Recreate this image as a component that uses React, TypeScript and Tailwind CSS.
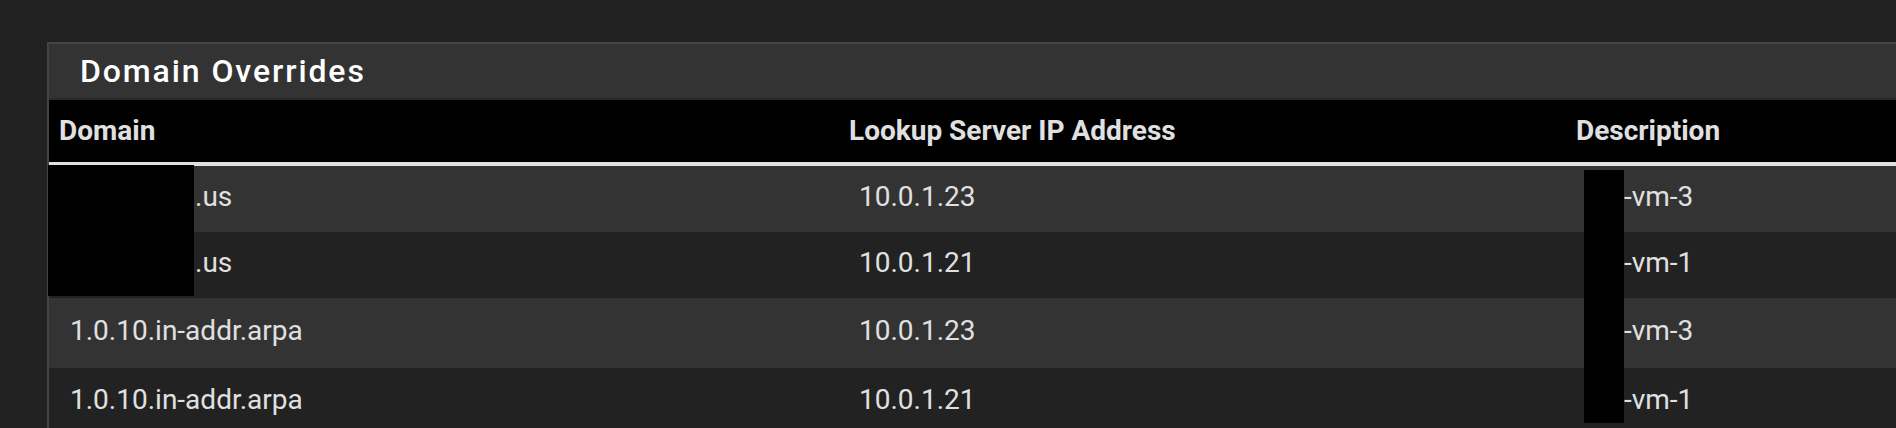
const rows = [
  { domain: ".us", ip: "10.0.1.23", desc: "-vm-3", h: "h-[68px]", bg: "bg-[#333333]" },
  { domain: ".us", ip: "10.0.1.21", desc: "-vm-1", h: "h-[66px]", bg: "bg-[#222222]" },
  { domain: "1.0.10.in-addr.arpa", ip: "10.0.1.23", desc: "-vm-3", h: "h-[70px]", bg: "bg-[#333333]" },
  { domain: "1.0.10.in-addr.arpa", ip: "10.0.1.21", desc: "-vm-1", h: "h-[68px]", bg: "bg-[#222222]" },
];

export default function App() {
  return (
    <div className="h-[428px] w-[1896px] overflow-hidden bg-[#212121] pl-[47px] pt-[42px] font-['Roboto',sans-serif]">
      <div className="w-[1900px] border-l-2 border-t-2 border-[#444444]">
        {/* panel heading */}
        <div className="flex h-[56px] items-center border-b-2 border-[#2a2a2a] bg-[#333333] pl-[31px]">
          <h2 className="text-[32px] font-medium tracking-[1.9px] text-white">Domain Overrides</h2>
        </div>

        <div className="relative">
          <table className="w-full table-fixed border-collapse">
            <thead>
              <tr className="h-[64px] border-b-4 border-[#e0e0e0] bg-black text-left">
                <th className="w-[789px] pl-[10px] text-[28px] font-bold text-[#e0e0e0]">Domain</th>
                <th className="w-[727px] pl-[11px] text-[28px] font-bold text-[#e0e0e0]">Lookup Server IP Address</th>
                <th className="pl-[11px] text-[28px] font-bold text-[#e0e0e0]">Description</th>
              </tr>
            </thead>
            <tbody>
              {rows.map((r, i) => (
                <tr key={i} className={`${r.h} ${r.bg}`}>
                  <td className="pb-[5px] pl-[21px] text-[28px] text-[#e0e0e0]">
                    {r.domain === ".us" ? <span className="pl-[125px]">{r.domain}</span> : r.domain}
                  </td>
                  <td className="pb-[5px] pl-[21px] text-[28px] text-[#e0e0e0]">{r.ip}</td>
                  <td className="pb-[5px] pl-[59px] text-[28px] text-[#e0e0e0]">{r.desc}</td>
                </tr>
              ))}
            </tbody>
          </table>

          {/* redaction boxes */}
          <div className="absolute left-[-1px] top-[65px] h-[131px] w-[146px] bg-black" />
          <div className="absolute left-[1535px] top-[70px] h-[253px] w-[40px] bg-black" />
        </div>
      </div>
    </div>
  );
}
